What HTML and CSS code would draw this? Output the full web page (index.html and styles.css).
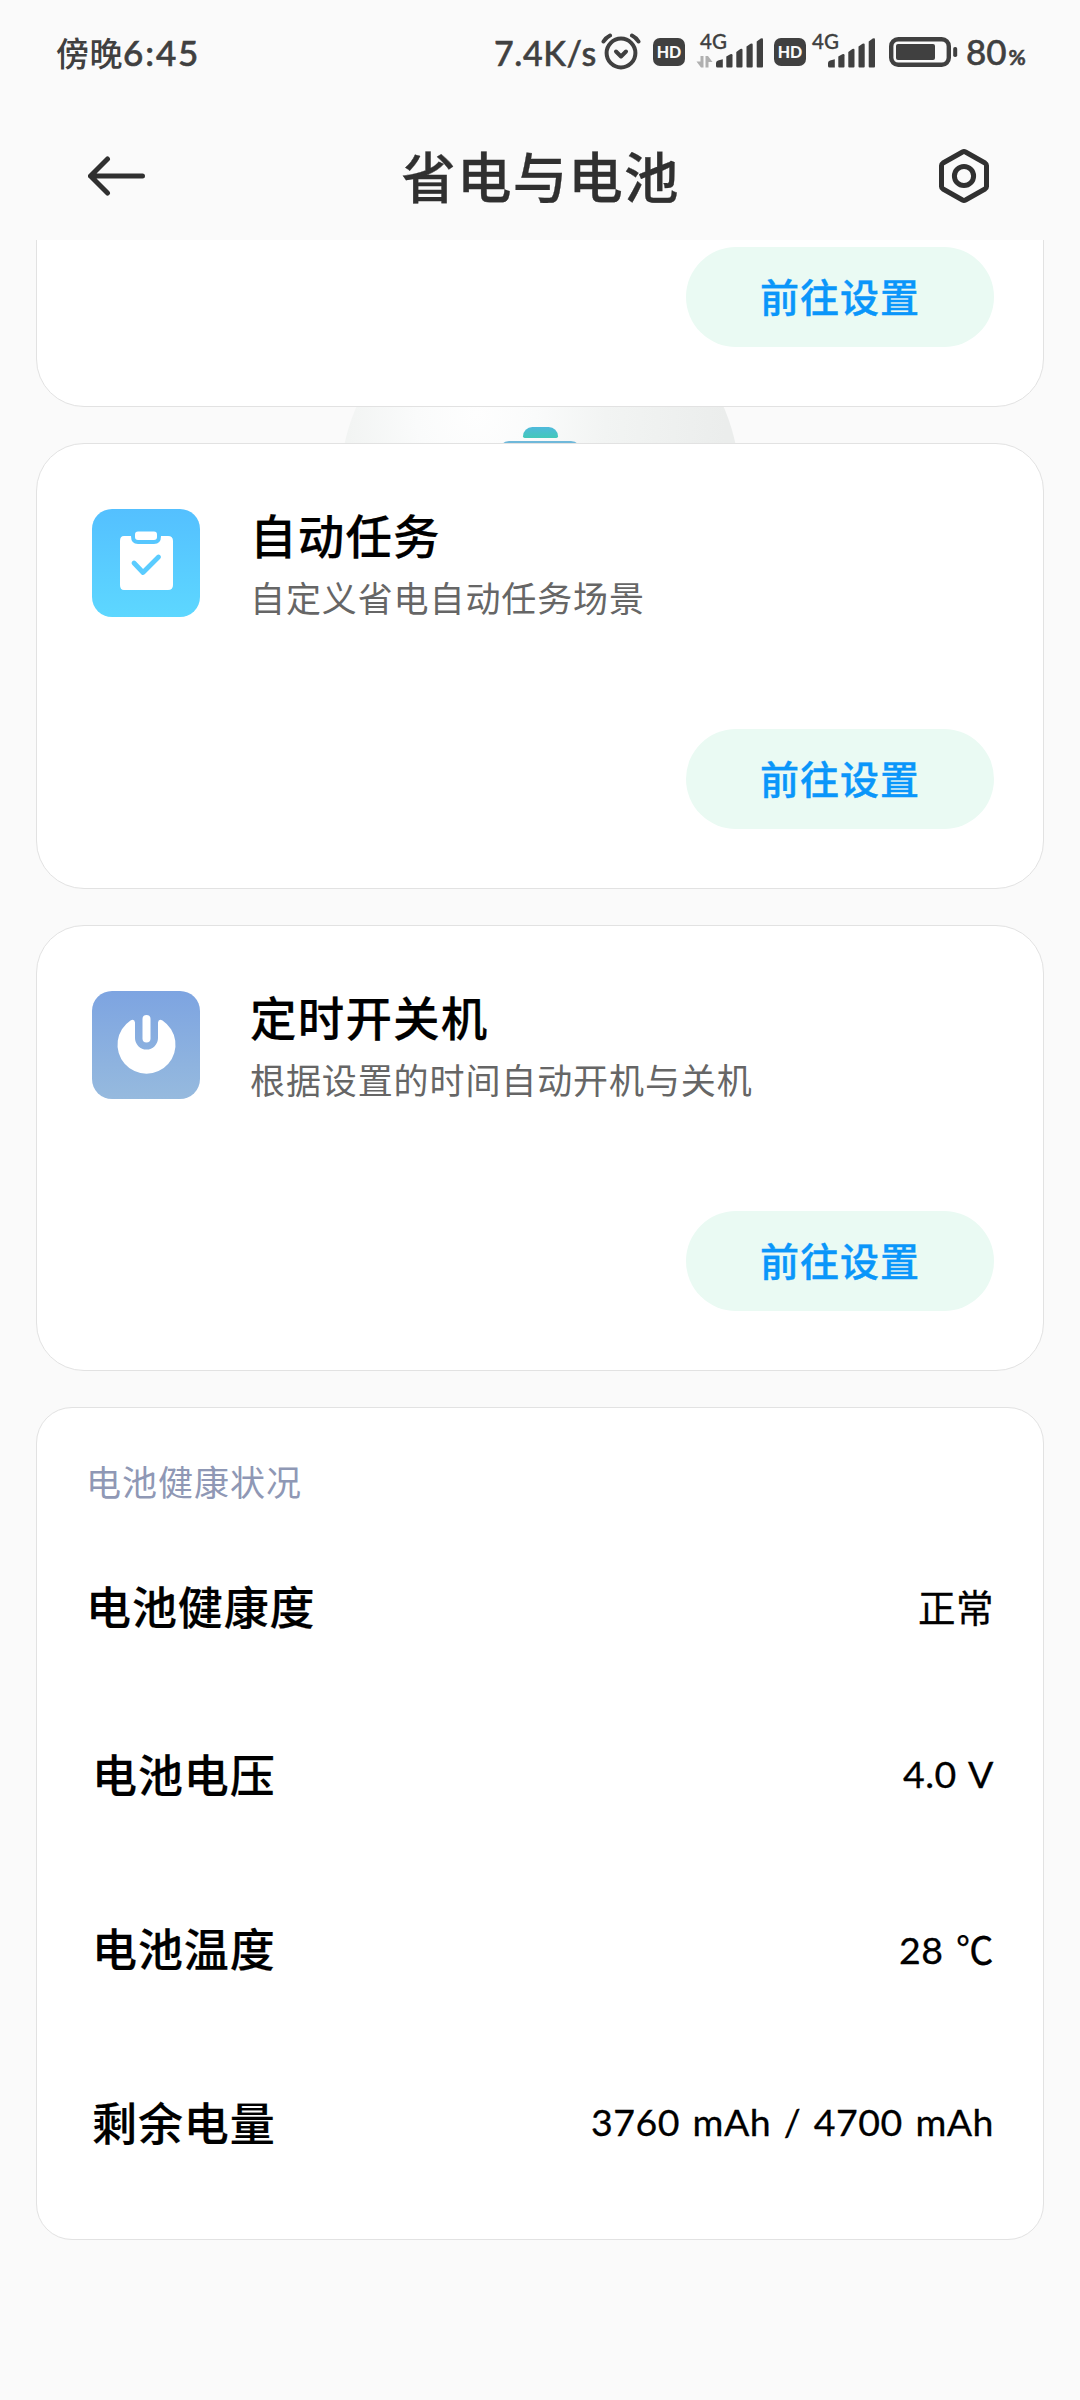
FILE: index.html
```html
<!doctype html>
<html lang="zh-CN">
  <head>
    <meta charset="UTF-8" />
    <meta name="viewport" content="width=device-width, initial-scale=1" />
    <title>省电与电池</title>
    <link rel="stylesheet" href="styles.css">
  </head>
  <body>
    <div class="screen">
      <div class="status-bar">
        <span class="time">傍晚<span class="digits">6:45</span></span>
        <div class="status-icons">
          <span class="speed">7.4K/s</span>
          <svg class="alarm" width="40" height="38" viewBox="0 0 40 38" fill="none" stroke="#404040" stroke-width="4" stroke-linecap="round" stroke-linejoin="round">
            <circle cx="20" cy="20" r="14.4" />
            <path d="M15 18.500l5 5 5-5" />
            <path d="M2.500 8.500q2.500-4 6.500-6M37.500 8.500q-2.500-4-6.500-6" />
          </svg>
          <span class="hd">HD</span>
          <div class="signal">
            <span class="net">4G</span>
            <svg width="68" height="36" viewBox="0 0 68 36">
              <path fill="#b0b0b0" d="M4.500 24h3v11.500h-2.500l-4.500-6h4zM9.500 35.500v-11.500h2.500l4.500 6h-4v5.500z" />
              <g id="bars" fill="#404040">
                <path d="M20 31q0-2 2-2.500l4.800-1.200v8.200h-5.300q-1.500 0-1.500-1.500z" />
                <path d="M30.300 24.500l4-2.300q2.200-.7 2.200 1v11.300q0 1-1 1h-4.200q-1 0-1-1z" />
                <path d="M40.300 20l4-3q2.200-1 2.200 1v16.500q0 1-1 1h-4.200q-1 0-1-1z" />
                <path d="M50.500 14.500l4-2.700q2.200-1 2.200 1v21.700q0 1-1 1h-4.200q-1 0-1-1z" />
                <path d="M60.700 9.500l4-3q2.300-1 2.300 1v27q0 1-1 1h-4.300q-1 0-1-1z" />
              </g>
            </svg>
          </div>
          <span class="hd hd-second">HD</span>
          <div class="signal signal-second">
            <span class="net">4G</span>
            <svg width="68" height="36" viewBox="0 0 68 36">
              <use href="#bars" />
            </svg>
          </div>
          <svg class="battery" width="69" height="30" viewBox="0 0 69 30">
            <rect x="2.200" y="2.200" width="57.600" height="25.600" rx="7" fill="none" stroke="#404040" stroke-width="4.400" />
            <rect x="7" y="7" width="39" height="16" rx="2" fill="#404040" />
            <rect x="64.200" y="10" width="4" height="10" rx="1.800" fill="#404040" />
          </svg>
          <span class="percent">80<small>%</small></span>
        </div>
      </div>

      <header class="header">
        <svg class="back" width="58" height="40" viewBox="0 0 58 40" fill="none" stroke="#303030" stroke-width="5" stroke-linecap="round" stroke-linejoin="round">
          <path d="M54.500 20h-52M19.500 3l-17 17 17 17" />
        </svg>
        <h1>省电与电池</h1>
        <svg class="settings" width="50" height="54" viewBox="0 0 50 54" fill="none" stroke="#303030" stroke-width="5" stroke-linejoin="round">
          <path d="M23.500 3q1.500-.8 3 0l19.500 11q1.500 1 1.500 2.600v20.800q0 1.600-1.500 2.600l-19.500 11q-1.500.8-3 0l-19.500-11q-1.500-1-1.500-2.600v-20.800q0-1.600 1.500-2.600z" />
          <circle cx="25" cy="27" r="9.600" />
        </svg>
      </header>

      <main class="content">
        <div class="orb">
          <div class="orb-cap"></div>
          <div class="orb-body"></div>
        </div>

        <section class="card card-scrolled">
          <button class="go">前往设置</button>
        </section>

        <section class="card">
          <div class="feature">
            <svg class="feature-icon" width="108" height="108" viewBox="0 0 108 108">
              <defs>
                <linearGradient id="sky" x1="0" y1="0" x2="0" y2="1">
                  <stop offset="0" stop-color="#54c0ff" />
                  <stop offset="1" stop-color="#5dd7ff" />
                </linearGradient>
              </defs>
              <rect width="108" height="108" rx="20" fill="url(#sky)" />
              <path fill="#fff" d="M32 27h7q0 8 7 8h16q7 0 7-8h7q5 0 5 5v44q0 5-5 5h-44q-4 0-4-5v-44q0-5 4-5z" />
              <rect x="43" y="22.500" width="22" height="8.500" rx="3" fill="#fff" />
              <path d="M42 54l9 9.500 15.500-15.500" fill="none" stroke="#5accff" stroke-width="4.800" stroke-linecap="round" stroke-linejoin="round" />
            </svg>
            <div class="feature-text">
              <h2>自动任务</h2>
              <p>自定义省电自动任务场景</p>
            </div>
          </div>
          <button class="go">前往设置</button>
        </section>

        <section class="card">
          <div class="feature">
            <svg class="feature-icon" width="108" height="108" viewBox="0 0 108 108">
              <defs>
                <linearGradient id="dusk" x1="0" y1="0" x2="0" y2="1">
                  <stop offset="0" stop-color="#7da4e1" />
                  <stop offset="1" stop-color="#96bade" />
                </linearGradient>
              </defs>
              <rect width="108" height="108" rx="20" fill="url(#dusk)" />
              <path fill="#fff" d="M38.500 29.500q4-2 4.500 2v15.500a11.500 11.500 0 0 0 23 0v-15.500q.5-4 4.500-2a29 29 0 1 1-32 0z" />
              <rect x="50.500" y="24" width="8" height="27.500" rx="4" fill="#fff" />
            </svg>
            <div class="feature-text">
              <h2>定时开关机</h2>
              <p>根据设置的时间自动开机与关机</p>
            </div>
          </div>
          <button class="go">前往设置</button>
        </section>

        <section class="card health">
          <h3>电池健康状况</h3>
          <div class="row row-first">
            <span class="label">电池健康度</span>
            <span class="value">正常</span>
          </div>
          <div class="row">
            <span class="label">电池电压</span>
            <span class="value">4.0 V</span>
          </div>
          <div class="row">
            <span class="label">电池温度</span>
            <span class="value">28 ℃</span>
          </div>
          <div class="row">
            <span class="label">剩余电量</span>
            <span class="value">3760 mAh / 4700 mAh</span>
          </div>
        </section>
      </main>
    </div>
  </body>
</html>
```

FILE: styles.css
```css
* {
  box-sizing: border-box;
}
body {
  margin: 0;
  background: #fafafa;
  font-family: Lato, 'Noto Sans CJK SC', sans-serif;
  color: #000;
}
h1,
h2,
h3,
p {
  margin: 0;
}
svg {
  display: block;
  flex: none;
}
.screen {
  display: flex;
  flex-direction: column;
  width: 1080px;
  height: 2400px;
  overflow: hidden;
}

/* status bar */
.status-bar {
  display: flex;
  justify-content: space-between;
  height: 100px;
  padding: 32px 47px 0 56px;
  color: #404040;
  font-weight: 500;
  white-space: nowrap;
  -webkit-text-stroke: 0.5px #404040;
}
.time {
  font-size: 33px;
  line-height: 40px;
  letter-spacing: 0.5px;
  -webkit-text-stroke-width: 0;
}
.digits {
  font-size: 35px;
  letter-spacing: 1.9px;
  -webkit-text-stroke-width: 0.6px;
}
.status-icons {
  display: flex;
  align-items: flex-start;
}
.speed {
  width: 107px;
  font-size: 34px;
  line-height: 42px;
  letter-spacing: 0.6px;
}
.alarm {
  margin-top: 1px;
}
.hd {
  width: 32px;
  height: 28px;
  margin: 6px 0 0 12px;
  border-radius: 7px;
  background: #404040;
  color: #fafafa;
  font-size: 16px;
  font-weight: 900;
  line-height: 28px;
  text-align: center;
  -webkit-text-stroke: 0;
}
.signal {
  position: relative;
  width: 68px;
  margin-left: 11px;
}
.net {
  position: absolute;
  top: -1px;
  left: 4px;
  font-size: 20.500px;
  line-height: 20px;
  -webkit-text-stroke-width: 0.3px;
}
.hd-second {
  margin-left: 10px;
}
.signal-second {
  margin-left: 2px;
}
.battery {
  margin: 5px 0 0 13px;
}
.percent {
  width: 67px;
  margin-left: 8px;
  font-size: 35px;
  line-height: 38px;
}
.percent small {
  margin-left: 2px;
  font-size: 21px;
  font-weight: 700;
}

/* title bar */
.header {
  display: flex;
  justify-content: space-between;
  height: 140px;
  padding: 49px 91px 0 88px;
}
.header h1 {
  margin: -12px 0 0 -4px;
  color: #303030;
  font-size: 54.500px;
  font-weight: 500;
  line-height: 80px;
  letter-spacing: 1.2px;
  -webkit-text-stroke: 0.3px #303030;
}
.back {
  margin-top: 7px;
}

/* scrolled list */
.content {
  position: relative;
  display: flex;
  flex: 1;
  flex-direction: column;
  gap: 36px;
  padding: 0 36px;
  overflow: hidden;
}
.orb {
  position: absolute;
  top: 46px;
  left: 340px;
  display: flex;
  flex-direction: column;
  align-items: center;
  gap: 3px;
  width: 400px;
  height: 400px;
  padding-top: 141px;
  border-radius: 50%;
  background: radial-gradient(circle at 34% 32%, #fefefe 0, #fafbfb 60px, #f2f4f3 130px, #ebedec 250px);
}
.orb-cap {
  width: 35px;
  height: 11px;
  border-radius: 11px 11px 2px 2px;
  background: linear-gradient(#4fb9dc, #42c9b9);
}
.orb-body {
  width: 82px;
  height: 110px;
  border-radius: 10px;
  background: #6fb8da;
}
.card {
  position: relative;
  display: flex;
  flex: none;
  flex-direction: column;
  justify-content: space-between;
  height: 446px;
  padding: 65px 49px 59px 55px;
  border: 1px solid #e2e2e2;
  border-radius: 48px;
  background: #fff;
}
.card-scrolled {
  justify-content: flex-end;
  margin-top: -279px;
}
.feature {
  display: flex;
  gap: 50px;
}
.feature h2 {
  margin-top: -5px;
  font-size: 46.500px;
  font-weight: 500;
  line-height: 64px;
  letter-spacing: 1.2px;
  -webkit-text-stroke: 0.2px #000;
}
.feature p {
  color: #666;
  font-size: 35px;
  line-height: 60px;
  letter-spacing: 0.9px;
}
.go {
  align-self: flex-end;
  width: 308px;
  height: 100px;
  padding: 0 0 4px;
  border: none;
  border-radius: 50px;
  background: #eafaf3;
  color: #0a96fa;
  font-family: inherit;
  font-size: 39px;
  font-weight: 500;
  letter-spacing: 1px;
  -webkit-text-stroke: 0.4px #0a96fa;
}

/* battery health */
.health {
  justify-content: flex-start;
  height: 833px;
  padding: 44px 49px 0;
  border-radius: 36px;
}
.health h3 {
  color: #8f98b5;
  font-size: 35px;
  font-weight: 400;
  line-height: 60px;
  letter-spacing: 1px;
}
.row {
  display: flex;
  align-items: center;
  justify-content: space-between;
  height: 174px;
  padding-left: 6px;
}
.row-first {
  height: 160px;
  margin: 13px 0 1px;
  padding-left: 0;
}
.label {
  font-size: 45px;
  font-weight: 500;
  letter-spacing: 0.9px;
  -webkit-text-stroke: 0.2px #000;
}
.value {
  font-size: 37.500px;
  letter-spacing: 0.5px;
  word-spacing: 2.500px;
  -webkit-text-stroke: 0.3px #000;
}
```
